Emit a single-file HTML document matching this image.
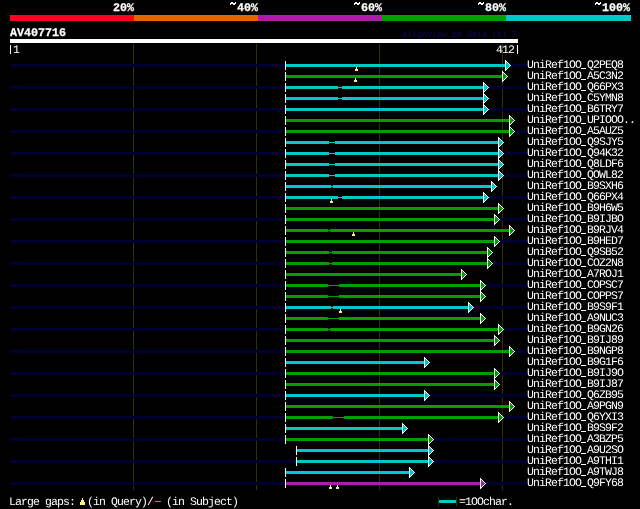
<!DOCTYPE html>
<html><head><meta charset="utf-8"><style>
html,body{margin:0;padding:0;background:#000;width:640px;height:509px;overflow:hidden;position:relative}
div{position:absolute;white-space:pre;font-family:"Liberation Mono",monospace;text-rendering:geometricPrecision;will-change:transform}
.s{font-size:11.5px;line-height:14px;letter-spacing:-0.9px}
.b{font-size:11.667px;line-height:14px;font-weight:bold;-webkit-text-stroke:0.25px currentColor}
.t{font-size:8.7px;line-height:10px;letter-spacing:-0.22px}
</style></head><body>
<svg width="640" height="509" viewBox="0 0 640 509" shape-rendering="crispEdges" style="position:absolute;left:0;top:0"><rect x="10" y="15" width="124" height="6" fill="#ff0022"/><rect x="134" y="15" width="124" height="6" fill="#e46400"/><rect x="258" y="15" width="124" height="6" fill="#a820a8"/><rect x="382" y="15" width="124" height="6" fill="#00a000"/><rect x="506" y="15" width="125" height="6" fill="#00c8c8"/><rect x="10" y="39" width="508" height="4" fill="#ffffff"/><rect x="133" y="44" width="1" height="446" fill="#333000"/><rect x="256" y="44" width="1" height="446" fill="#333000"/><rect x="379" y="44" width="1" height="446" fill="#333000"/><rect x="502" y="44" width="1" height="446" fill="#333000"/><rect x="10" y="64" width="517" height="3" fill="#000030"/><rect x="10" y="86" width="517" height="3" fill="#000030"/><rect x="10" y="108" width="517" height="3" fill="#000030"/><rect x="10" y="130" width="517" height="3" fill="#000030"/><rect x="10" y="152" width="517" height="3" fill="#000030"/><rect x="10" y="174" width="517" height="3" fill="#000030"/><rect x="10" y="196" width="517" height="3" fill="#000030"/><rect x="10" y="218" width="517" height="3" fill="#000030"/><rect x="10" y="240" width="517" height="3" fill="#000030"/><rect x="10" y="262" width="517" height="3" fill="#000030"/><rect x="10" y="284" width="517" height="3" fill="#000030"/><rect x="10" y="306" width="517" height="3" fill="#000030"/><rect x="10" y="328" width="517" height="3" fill="#000030"/><rect x="10" y="350" width="517" height="3" fill="#000030"/><rect x="10" y="372" width="517" height="3" fill="#000030"/><rect x="10" y="394" width="517" height="3" fill="#000030"/><rect x="10" y="416" width="517" height="3" fill="#000030"/><rect x="10" y="438" width="517" height="3" fill="#000030"/><rect x="10" y="460" width="517" height="3" fill="#000030"/><rect x="10" y="482" width="517" height="3" fill="#000030"/><rect x="285" y="61" width="1" height="9" fill="#ffffff"/><rect x="286" y="64" width="219" height="3" fill="#00c8c8"/><rect x="505" y="60" width="1" height="1" fill="#ffffff"/><rect x="505" y="61" width="1" height="1" fill="#ffffff"/><rect x="506" y="61" width="1" height="1" fill="#ffffff"/><rect x="505" y="62" width="1" height="1" fill="#ffffff"/><rect x="507" y="62" width="1" height="1" fill="#ffffff"/><rect x="506" y="62" width="1" height="1" fill="#00c8c8"/><rect x="505" y="63" width="1" height="1" fill="#ffffff"/><rect x="508" y="63" width="1" height="1" fill="#ffffff"/><rect x="506" y="63" width="2" height="1" fill="#00c8c8"/><rect x="505" y="64" width="1" height="1" fill="#ffffff"/><rect x="509" y="64" width="1" height="1" fill="#ffffff"/><rect x="506" y="64" width="3" height="1" fill="#00c8c8"/><rect x="505" y="65" width="1" height="1" fill="#ffffff"/><rect x="510" y="65" width="1" height="1" fill="#ffffff"/><rect x="506" y="65" width="4" height="1" fill="#00c8c8"/><rect x="505" y="66" width="1" height="1" fill="#ffffff"/><rect x="509" y="66" width="1" height="1" fill="#ffffff"/><rect x="506" y="66" width="3" height="1" fill="#00c8c8"/><rect x="505" y="67" width="1" height="1" fill="#ffffff"/><rect x="508" y="67" width="1" height="1" fill="#ffffff"/><rect x="506" y="67" width="2" height="1" fill="#00c8c8"/><rect x="505" y="68" width="1" height="1" fill="#ffffff"/><rect x="507" y="68" width="1" height="1" fill="#ffffff"/><rect x="506" y="68" width="1" height="1" fill="#00c8c8"/><rect x="505" y="69" width="1" height="1" fill="#ffffff"/><rect x="506" y="69" width="1" height="1" fill="#ffffff"/><rect x="505" y="70" width="1" height="1" fill="#ffffff"/><rect x="356" y="67" width="1" height="2" fill="#fff080"/><rect x="355" y="69" width="3" height="2" fill="#fff080"/><rect x="285" y="72" width="1" height="9" fill="#ffffff"/><rect x="286" y="75" width="216" height="3" fill="#00a000"/><rect x="502" y="71" width="1" height="1" fill="#ffffff"/><rect x="502" y="72" width="1" height="1" fill="#ffffff"/><rect x="503" y="72" width="1" height="1" fill="#ffffff"/><rect x="502" y="73" width="1" height="1" fill="#ffffff"/><rect x="504" y="73" width="1" height="1" fill="#ffffff"/><rect x="503" y="73" width="1" height="1" fill="#00a000"/><rect x="502" y="74" width="1" height="1" fill="#ffffff"/><rect x="505" y="74" width="1" height="1" fill="#ffffff"/><rect x="503" y="74" width="2" height="1" fill="#00a000"/><rect x="502" y="75" width="1" height="1" fill="#ffffff"/><rect x="506" y="75" width="1" height="1" fill="#ffffff"/><rect x="503" y="75" width="3" height="1" fill="#00a000"/><rect x="502" y="76" width="1" height="1" fill="#ffffff"/><rect x="507" y="76" width="1" height="1" fill="#ffffff"/><rect x="503" y="76" width="4" height="1" fill="#00a000"/><rect x="502" y="77" width="1" height="1" fill="#ffffff"/><rect x="506" y="77" width="1" height="1" fill="#ffffff"/><rect x="503" y="77" width="3" height="1" fill="#00a000"/><rect x="502" y="78" width="1" height="1" fill="#ffffff"/><rect x="505" y="78" width="1" height="1" fill="#ffffff"/><rect x="503" y="78" width="2" height="1" fill="#00a000"/><rect x="502" y="79" width="1" height="1" fill="#ffffff"/><rect x="504" y="79" width="1" height="1" fill="#ffffff"/><rect x="503" y="79" width="1" height="1" fill="#00a000"/><rect x="502" y="80" width="1" height="1" fill="#ffffff"/><rect x="503" y="80" width="1" height="1" fill="#ffffff"/><rect x="502" y="81" width="1" height="1" fill="#ffffff"/><rect x="355" y="78" width="1" height="2" fill="#fff080"/><rect x="354" y="80" width="3" height="2" fill="#fff080"/><rect x="285" y="83" width="1" height="9" fill="#ffffff"/><rect x="338" y="86" width="4" height="3" fill="#000000"/><rect x="286" y="87" width="197" height="1" fill="#00c8c8"/><rect x="286" y="86" width="52" height="3" fill="#00c8c8"/><rect x="342" y="86" width="141" height="3" fill="#00c8c8"/><rect x="483" y="82" width="1" height="1" fill="#ffffff"/><rect x="483" y="83" width="1" height="1" fill="#ffffff"/><rect x="484" y="83" width="1" height="1" fill="#ffffff"/><rect x="483" y="84" width="1" height="1" fill="#ffffff"/><rect x="485" y="84" width="1" height="1" fill="#ffffff"/><rect x="484" y="84" width="1" height="1" fill="#00c8c8"/><rect x="483" y="85" width="1" height="1" fill="#ffffff"/><rect x="486" y="85" width="1" height="1" fill="#ffffff"/><rect x="484" y="85" width="2" height="1" fill="#00c8c8"/><rect x="483" y="86" width="1" height="1" fill="#ffffff"/><rect x="487" y="86" width="1" height="1" fill="#ffffff"/><rect x="484" y="86" width="3" height="1" fill="#00c8c8"/><rect x="483" y="87" width="1" height="1" fill="#ffffff"/><rect x="488" y="87" width="1" height="1" fill="#ffffff"/><rect x="484" y="87" width="4" height="1" fill="#00c8c8"/><rect x="483" y="88" width="1" height="1" fill="#ffffff"/><rect x="487" y="88" width="1" height="1" fill="#ffffff"/><rect x="484" y="88" width="3" height="1" fill="#00c8c8"/><rect x="483" y="89" width="1" height="1" fill="#ffffff"/><rect x="486" y="89" width="1" height="1" fill="#ffffff"/><rect x="484" y="89" width="2" height="1" fill="#00c8c8"/><rect x="483" y="90" width="1" height="1" fill="#ffffff"/><rect x="485" y="90" width="1" height="1" fill="#ffffff"/><rect x="484" y="90" width="1" height="1" fill="#00c8c8"/><rect x="483" y="91" width="1" height="1" fill="#ffffff"/><rect x="484" y="91" width="1" height="1" fill="#ffffff"/><rect x="483" y="92" width="1" height="1" fill="#ffffff"/><rect x="285" y="94" width="1" height="9" fill="#ffffff"/><rect x="338" y="97" width="4" height="3" fill="#000000"/><rect x="286" y="98" width="197" height="1" fill="#00c8c8"/><rect x="286" y="97" width="52" height="3" fill="#00c8c8"/><rect x="342" y="97" width="141" height="3" fill="#00c8c8"/><rect x="483" y="93" width="1" height="1" fill="#ffffff"/><rect x="483" y="94" width="1" height="1" fill="#ffffff"/><rect x="484" y="94" width="1" height="1" fill="#ffffff"/><rect x="483" y="95" width="1" height="1" fill="#ffffff"/><rect x="485" y="95" width="1" height="1" fill="#ffffff"/><rect x="484" y="95" width="1" height="1" fill="#00c8c8"/><rect x="483" y="96" width="1" height="1" fill="#ffffff"/><rect x="486" y="96" width="1" height="1" fill="#ffffff"/><rect x="484" y="96" width="2" height="1" fill="#00c8c8"/><rect x="483" y="97" width="1" height="1" fill="#ffffff"/><rect x="487" y="97" width="1" height="1" fill="#ffffff"/><rect x="484" y="97" width="3" height="1" fill="#00c8c8"/><rect x="483" y="98" width="1" height="1" fill="#ffffff"/><rect x="488" y="98" width="1" height="1" fill="#ffffff"/><rect x="484" y="98" width="4" height="1" fill="#00c8c8"/><rect x="483" y="99" width="1" height="1" fill="#ffffff"/><rect x="487" y="99" width="1" height="1" fill="#ffffff"/><rect x="484" y="99" width="3" height="1" fill="#00c8c8"/><rect x="483" y="100" width="1" height="1" fill="#ffffff"/><rect x="486" y="100" width="1" height="1" fill="#ffffff"/><rect x="484" y="100" width="2" height="1" fill="#00c8c8"/><rect x="483" y="101" width="1" height="1" fill="#ffffff"/><rect x="485" y="101" width="1" height="1" fill="#ffffff"/><rect x="484" y="101" width="1" height="1" fill="#00c8c8"/><rect x="483" y="102" width="1" height="1" fill="#ffffff"/><rect x="484" y="102" width="1" height="1" fill="#ffffff"/><rect x="483" y="103" width="1" height="1" fill="#ffffff"/><rect x="285" y="105" width="1" height="9" fill="#ffffff"/><rect x="286" y="108" width="197" height="3" fill="#00c8c8"/><rect x="483" y="104" width="1" height="1" fill="#ffffff"/><rect x="483" y="105" width="1" height="1" fill="#ffffff"/><rect x="484" y="105" width="1" height="1" fill="#ffffff"/><rect x="483" y="106" width="1" height="1" fill="#ffffff"/><rect x="485" y="106" width="1" height="1" fill="#ffffff"/><rect x="484" y="106" width="1" height="1" fill="#00c8c8"/><rect x="483" y="107" width="1" height="1" fill="#ffffff"/><rect x="486" y="107" width="1" height="1" fill="#ffffff"/><rect x="484" y="107" width="2" height="1" fill="#00c8c8"/><rect x="483" y="108" width="1" height="1" fill="#ffffff"/><rect x="487" y="108" width="1" height="1" fill="#ffffff"/><rect x="484" y="108" width="3" height="1" fill="#00c8c8"/><rect x="483" y="109" width="1" height="1" fill="#ffffff"/><rect x="488" y="109" width="1" height="1" fill="#ffffff"/><rect x="484" y="109" width="4" height="1" fill="#00c8c8"/><rect x="483" y="110" width="1" height="1" fill="#ffffff"/><rect x="487" y="110" width="1" height="1" fill="#ffffff"/><rect x="484" y="110" width="3" height="1" fill="#00c8c8"/><rect x="483" y="111" width="1" height="1" fill="#ffffff"/><rect x="486" y="111" width="1" height="1" fill="#ffffff"/><rect x="484" y="111" width="2" height="1" fill="#00c8c8"/><rect x="483" y="112" width="1" height="1" fill="#ffffff"/><rect x="485" y="112" width="1" height="1" fill="#ffffff"/><rect x="484" y="112" width="1" height="1" fill="#00c8c8"/><rect x="483" y="113" width="1" height="1" fill="#ffffff"/><rect x="484" y="113" width="1" height="1" fill="#ffffff"/><rect x="483" y="114" width="1" height="1" fill="#ffffff"/><rect x="285" y="116" width="1" height="9" fill="#ffffff"/><rect x="286" y="119" width="223" height="3" fill="#00a000"/><rect x="509" y="115" width="1" height="1" fill="#ffffff"/><rect x="509" y="116" width="1" height="1" fill="#ffffff"/><rect x="510" y="116" width="1" height="1" fill="#ffffff"/><rect x="509" y="117" width="1" height="1" fill="#ffffff"/><rect x="511" y="117" width="1" height="1" fill="#ffffff"/><rect x="510" y="117" width="1" height="1" fill="#00a000"/><rect x="509" y="118" width="1" height="1" fill="#ffffff"/><rect x="512" y="118" width="1" height="1" fill="#ffffff"/><rect x="510" y="118" width="2" height="1" fill="#00a000"/><rect x="509" y="119" width="1" height="1" fill="#ffffff"/><rect x="513" y="119" width="1" height="1" fill="#ffffff"/><rect x="510" y="119" width="3" height="1" fill="#00a000"/><rect x="509" y="120" width="1" height="1" fill="#ffffff"/><rect x="514" y="120" width="1" height="1" fill="#ffffff"/><rect x="510" y="120" width="4" height="1" fill="#00a000"/><rect x="509" y="121" width="1" height="1" fill="#ffffff"/><rect x="513" y="121" width="1" height="1" fill="#ffffff"/><rect x="510" y="121" width="3" height="1" fill="#00a000"/><rect x="509" y="122" width="1" height="1" fill="#ffffff"/><rect x="512" y="122" width="1" height="1" fill="#ffffff"/><rect x="510" y="122" width="2" height="1" fill="#00a000"/><rect x="509" y="123" width="1" height="1" fill="#ffffff"/><rect x="511" y="123" width="1" height="1" fill="#ffffff"/><rect x="510" y="123" width="1" height="1" fill="#00a000"/><rect x="509" y="124" width="1" height="1" fill="#ffffff"/><rect x="510" y="124" width="1" height="1" fill="#ffffff"/><rect x="509" y="125" width="1" height="1" fill="#ffffff"/><rect x="285" y="127" width="1" height="9" fill="#ffffff"/><rect x="286" y="130" width="223" height="3" fill="#00a000"/><rect x="509" y="126" width="1" height="1" fill="#ffffff"/><rect x="509" y="127" width="1" height="1" fill="#ffffff"/><rect x="510" y="127" width="1" height="1" fill="#ffffff"/><rect x="509" y="128" width="1" height="1" fill="#ffffff"/><rect x="511" y="128" width="1" height="1" fill="#ffffff"/><rect x="510" y="128" width="1" height="1" fill="#00a000"/><rect x="509" y="129" width="1" height="1" fill="#ffffff"/><rect x="512" y="129" width="1" height="1" fill="#ffffff"/><rect x="510" y="129" width="2" height="1" fill="#00a000"/><rect x="509" y="130" width="1" height="1" fill="#ffffff"/><rect x="513" y="130" width="1" height="1" fill="#ffffff"/><rect x="510" y="130" width="3" height="1" fill="#00a000"/><rect x="509" y="131" width="1" height="1" fill="#ffffff"/><rect x="514" y="131" width="1" height="1" fill="#ffffff"/><rect x="510" y="131" width="4" height="1" fill="#00a000"/><rect x="509" y="132" width="1" height="1" fill="#ffffff"/><rect x="513" y="132" width="1" height="1" fill="#ffffff"/><rect x="510" y="132" width="3" height="1" fill="#00a000"/><rect x="509" y="133" width="1" height="1" fill="#ffffff"/><rect x="512" y="133" width="1" height="1" fill="#ffffff"/><rect x="510" y="133" width="2" height="1" fill="#00a000"/><rect x="509" y="134" width="1" height="1" fill="#ffffff"/><rect x="511" y="134" width="1" height="1" fill="#ffffff"/><rect x="510" y="134" width="1" height="1" fill="#00a000"/><rect x="509" y="135" width="1" height="1" fill="#ffffff"/><rect x="510" y="135" width="1" height="1" fill="#ffffff"/><rect x="509" y="136" width="1" height="1" fill="#ffffff"/><rect x="285" y="138" width="1" height="9" fill="#ffffff"/><rect x="329" y="141" width="6" height="3" fill="#000000"/><rect x="286" y="142" width="212" height="1" fill="#00c8c8"/><rect x="286" y="141" width="43" height="3" fill="#00c8c8"/><rect x="335" y="141" width="163" height="3" fill="#00c8c8"/><rect x="498" y="137" width="1" height="1" fill="#ffffff"/><rect x="498" y="138" width="1" height="1" fill="#ffffff"/><rect x="499" y="138" width="1" height="1" fill="#ffffff"/><rect x="498" y="139" width="1" height="1" fill="#ffffff"/><rect x="500" y="139" width="1" height="1" fill="#ffffff"/><rect x="499" y="139" width="1" height="1" fill="#00c8c8"/><rect x="498" y="140" width="1" height="1" fill="#ffffff"/><rect x="501" y="140" width="1" height="1" fill="#ffffff"/><rect x="499" y="140" width="2" height="1" fill="#00c8c8"/><rect x="498" y="141" width="1" height="1" fill="#ffffff"/><rect x="502" y="141" width="1" height="1" fill="#ffffff"/><rect x="499" y="141" width="3" height="1" fill="#00c8c8"/><rect x="498" y="142" width="1" height="1" fill="#ffffff"/><rect x="503" y="142" width="1" height="1" fill="#ffffff"/><rect x="499" y="142" width="4" height="1" fill="#00c8c8"/><rect x="498" y="143" width="1" height="1" fill="#ffffff"/><rect x="502" y="143" width="1" height="1" fill="#ffffff"/><rect x="499" y="143" width="3" height="1" fill="#00c8c8"/><rect x="498" y="144" width="1" height="1" fill="#ffffff"/><rect x="501" y="144" width="1" height="1" fill="#ffffff"/><rect x="499" y="144" width="2" height="1" fill="#00c8c8"/><rect x="498" y="145" width="1" height="1" fill="#ffffff"/><rect x="500" y="145" width="1" height="1" fill="#ffffff"/><rect x="499" y="145" width="1" height="1" fill="#00c8c8"/><rect x="498" y="146" width="1" height="1" fill="#ffffff"/><rect x="499" y="146" width="1" height="1" fill="#ffffff"/><rect x="498" y="147" width="1" height="1" fill="#ffffff"/><rect x="285" y="149" width="1" height="9" fill="#ffffff"/><rect x="329" y="152" width="6" height="3" fill="#000000"/><rect x="286" y="153" width="212" height="1" fill="#00c8c8"/><rect x="286" y="152" width="43" height="3" fill="#00c8c8"/><rect x="335" y="152" width="163" height="3" fill="#00c8c8"/><rect x="498" y="148" width="1" height="1" fill="#ffffff"/><rect x="498" y="149" width="1" height="1" fill="#ffffff"/><rect x="499" y="149" width="1" height="1" fill="#ffffff"/><rect x="498" y="150" width="1" height="1" fill="#ffffff"/><rect x="500" y="150" width="1" height="1" fill="#ffffff"/><rect x="499" y="150" width="1" height="1" fill="#00c8c8"/><rect x="498" y="151" width="1" height="1" fill="#ffffff"/><rect x="501" y="151" width="1" height="1" fill="#ffffff"/><rect x="499" y="151" width="2" height="1" fill="#00c8c8"/><rect x="498" y="152" width="1" height="1" fill="#ffffff"/><rect x="502" y="152" width="1" height="1" fill="#ffffff"/><rect x="499" y="152" width="3" height="1" fill="#00c8c8"/><rect x="498" y="153" width="1" height="1" fill="#ffffff"/><rect x="503" y="153" width="1" height="1" fill="#ffffff"/><rect x="499" y="153" width="4" height="1" fill="#00c8c8"/><rect x="498" y="154" width="1" height="1" fill="#ffffff"/><rect x="502" y="154" width="1" height="1" fill="#ffffff"/><rect x="499" y="154" width="3" height="1" fill="#00c8c8"/><rect x="498" y="155" width="1" height="1" fill="#ffffff"/><rect x="501" y="155" width="1" height="1" fill="#ffffff"/><rect x="499" y="155" width="2" height="1" fill="#00c8c8"/><rect x="498" y="156" width="1" height="1" fill="#ffffff"/><rect x="500" y="156" width="1" height="1" fill="#ffffff"/><rect x="499" y="156" width="1" height="1" fill="#00c8c8"/><rect x="498" y="157" width="1" height="1" fill="#ffffff"/><rect x="499" y="157" width="1" height="1" fill="#ffffff"/><rect x="498" y="158" width="1" height="1" fill="#ffffff"/><rect x="285" y="160" width="1" height="9" fill="#ffffff"/><rect x="329" y="163" width="6" height="3" fill="#000000"/><rect x="286" y="164" width="212" height="1" fill="#00c8c8"/><rect x="286" y="163" width="43" height="3" fill="#00c8c8"/><rect x="335" y="163" width="163" height="3" fill="#00c8c8"/><rect x="498" y="159" width="1" height="1" fill="#ffffff"/><rect x="498" y="160" width="1" height="1" fill="#ffffff"/><rect x="499" y="160" width="1" height="1" fill="#ffffff"/><rect x="498" y="161" width="1" height="1" fill="#ffffff"/><rect x="500" y="161" width="1" height="1" fill="#ffffff"/><rect x="499" y="161" width="1" height="1" fill="#00c8c8"/><rect x="498" y="162" width="1" height="1" fill="#ffffff"/><rect x="501" y="162" width="1" height="1" fill="#ffffff"/><rect x="499" y="162" width="2" height="1" fill="#00c8c8"/><rect x="498" y="163" width="1" height="1" fill="#ffffff"/><rect x="502" y="163" width="1" height="1" fill="#ffffff"/><rect x="499" y="163" width="3" height="1" fill="#00c8c8"/><rect x="498" y="164" width="1" height="1" fill="#ffffff"/><rect x="503" y="164" width="1" height="1" fill="#ffffff"/><rect x="499" y="164" width="4" height="1" fill="#00c8c8"/><rect x="498" y="165" width="1" height="1" fill="#ffffff"/><rect x="502" y="165" width="1" height="1" fill="#ffffff"/><rect x="499" y="165" width="3" height="1" fill="#00c8c8"/><rect x="498" y="166" width="1" height="1" fill="#ffffff"/><rect x="501" y="166" width="1" height="1" fill="#ffffff"/><rect x="499" y="166" width="2" height="1" fill="#00c8c8"/><rect x="498" y="167" width="1" height="1" fill="#ffffff"/><rect x="500" y="167" width="1" height="1" fill="#ffffff"/><rect x="499" y="167" width="1" height="1" fill="#00c8c8"/><rect x="498" y="168" width="1" height="1" fill="#ffffff"/><rect x="499" y="168" width="1" height="1" fill="#ffffff"/><rect x="498" y="169" width="1" height="1" fill="#ffffff"/><rect x="285" y="171" width="1" height="9" fill="#ffffff"/><rect x="329" y="174" width="6" height="3" fill="#000000"/><rect x="286" y="175" width="212" height="1" fill="#00c8c8"/><rect x="286" y="174" width="43" height="3" fill="#00c8c8"/><rect x="335" y="174" width="163" height="3" fill="#00c8c8"/><rect x="498" y="170" width="1" height="1" fill="#ffffff"/><rect x="498" y="171" width="1" height="1" fill="#ffffff"/><rect x="499" y="171" width="1" height="1" fill="#ffffff"/><rect x="498" y="172" width="1" height="1" fill="#ffffff"/><rect x="500" y="172" width="1" height="1" fill="#ffffff"/><rect x="499" y="172" width="1" height="1" fill="#00c8c8"/><rect x="498" y="173" width="1" height="1" fill="#ffffff"/><rect x="501" y="173" width="1" height="1" fill="#ffffff"/><rect x="499" y="173" width="2" height="1" fill="#00c8c8"/><rect x="498" y="174" width="1" height="1" fill="#ffffff"/><rect x="502" y="174" width="1" height="1" fill="#ffffff"/><rect x="499" y="174" width="3" height="1" fill="#00c8c8"/><rect x="498" y="175" width="1" height="1" fill="#ffffff"/><rect x="503" y="175" width="1" height="1" fill="#ffffff"/><rect x="499" y="175" width="4" height="1" fill="#00c8c8"/><rect x="498" y="176" width="1" height="1" fill="#ffffff"/><rect x="502" y="176" width="1" height="1" fill="#ffffff"/><rect x="499" y="176" width="3" height="1" fill="#00c8c8"/><rect x="498" y="177" width="1" height="1" fill="#ffffff"/><rect x="501" y="177" width="1" height="1" fill="#ffffff"/><rect x="499" y="177" width="2" height="1" fill="#00c8c8"/><rect x="498" y="178" width="1" height="1" fill="#ffffff"/><rect x="500" y="178" width="1" height="1" fill="#ffffff"/><rect x="499" y="178" width="1" height="1" fill="#00c8c8"/><rect x="498" y="179" width="1" height="1" fill="#ffffff"/><rect x="499" y="179" width="1" height="1" fill="#ffffff"/><rect x="498" y="180" width="1" height="1" fill="#ffffff"/><rect x="285" y="182" width="1" height="9" fill="#ffffff"/><rect x="331" y="185" width="2" height="3" fill="#000000"/><rect x="286" y="186" width="205" height="1" fill="#00c8c8"/><rect x="286" y="185" width="45" height="3" fill="#00c8c8"/><rect x="333" y="185" width="158" height="3" fill="#00c8c8"/><rect x="491" y="181" width="1" height="1" fill="#ffffff"/><rect x="491" y="182" width="1" height="1" fill="#ffffff"/><rect x="492" y="182" width="1" height="1" fill="#ffffff"/><rect x="491" y="183" width="1" height="1" fill="#ffffff"/><rect x="493" y="183" width="1" height="1" fill="#ffffff"/><rect x="492" y="183" width="1" height="1" fill="#00c8c8"/><rect x="491" y="184" width="1" height="1" fill="#ffffff"/><rect x="494" y="184" width="1" height="1" fill="#ffffff"/><rect x="492" y="184" width="2" height="1" fill="#00c8c8"/><rect x="491" y="185" width="1" height="1" fill="#ffffff"/><rect x="495" y="185" width="1" height="1" fill="#ffffff"/><rect x="492" y="185" width="3" height="1" fill="#00c8c8"/><rect x="491" y="186" width="1" height="1" fill="#ffffff"/><rect x="496" y="186" width="1" height="1" fill="#ffffff"/><rect x="492" y="186" width="4" height="1" fill="#00c8c8"/><rect x="491" y="187" width="1" height="1" fill="#ffffff"/><rect x="495" y="187" width="1" height="1" fill="#ffffff"/><rect x="492" y="187" width="3" height="1" fill="#00c8c8"/><rect x="491" y="188" width="1" height="1" fill="#ffffff"/><rect x="494" y="188" width="1" height="1" fill="#ffffff"/><rect x="492" y="188" width="2" height="1" fill="#00c8c8"/><rect x="491" y="189" width="1" height="1" fill="#ffffff"/><rect x="493" y="189" width="1" height="1" fill="#ffffff"/><rect x="492" y="189" width="1" height="1" fill="#00c8c8"/><rect x="491" y="190" width="1" height="1" fill="#ffffff"/><rect x="492" y="190" width="1" height="1" fill="#ffffff"/><rect x="491" y="191" width="1" height="1" fill="#ffffff"/><rect x="285" y="193" width="1" height="9" fill="#ffffff"/><rect x="338" y="196" width="4" height="3" fill="#000000"/><rect x="286" y="197" width="197" height="1" fill="#00c8c8"/><rect x="286" y="196" width="52" height="3" fill="#00c8c8"/><rect x="342" y="196" width="141" height="3" fill="#00c8c8"/><rect x="483" y="192" width="1" height="1" fill="#ffffff"/><rect x="483" y="193" width="1" height="1" fill="#ffffff"/><rect x="484" y="193" width="1" height="1" fill="#ffffff"/><rect x="483" y="194" width="1" height="1" fill="#ffffff"/><rect x="485" y="194" width="1" height="1" fill="#ffffff"/><rect x="484" y="194" width="1" height="1" fill="#00c8c8"/><rect x="483" y="195" width="1" height="1" fill="#ffffff"/><rect x="486" y="195" width="1" height="1" fill="#ffffff"/><rect x="484" y="195" width="2" height="1" fill="#00c8c8"/><rect x="483" y="196" width="1" height="1" fill="#ffffff"/><rect x="487" y="196" width="1" height="1" fill="#ffffff"/><rect x="484" y="196" width="3" height="1" fill="#00c8c8"/><rect x="483" y="197" width="1" height="1" fill="#ffffff"/><rect x="488" y="197" width="1" height="1" fill="#ffffff"/><rect x="484" y="197" width="4" height="1" fill="#00c8c8"/><rect x="483" y="198" width="1" height="1" fill="#ffffff"/><rect x="487" y="198" width="1" height="1" fill="#ffffff"/><rect x="484" y="198" width="3" height="1" fill="#00c8c8"/><rect x="483" y="199" width="1" height="1" fill="#ffffff"/><rect x="486" y="199" width="1" height="1" fill="#ffffff"/><rect x="484" y="199" width="2" height="1" fill="#00c8c8"/><rect x="483" y="200" width="1" height="1" fill="#ffffff"/><rect x="485" y="200" width="1" height="1" fill="#ffffff"/><rect x="484" y="200" width="1" height="1" fill="#00c8c8"/><rect x="483" y="201" width="1" height="1" fill="#ffffff"/><rect x="484" y="201" width="1" height="1" fill="#ffffff"/><rect x="483" y="202" width="1" height="1" fill="#ffffff"/><rect x="331" y="199" width="1" height="2" fill="#fff080"/><rect x="330" y="201" width="3" height="2" fill="#fff080"/><rect x="285" y="204" width="1" height="9" fill="#ffffff"/><rect x="286" y="207" width="212" height="3" fill="#00a000"/><rect x="498" y="203" width="1" height="1" fill="#ffffff"/><rect x="498" y="204" width="1" height="1" fill="#ffffff"/><rect x="499" y="204" width="1" height="1" fill="#ffffff"/><rect x="498" y="205" width="1" height="1" fill="#ffffff"/><rect x="500" y="205" width="1" height="1" fill="#ffffff"/><rect x="499" y="205" width="1" height="1" fill="#00a000"/><rect x="498" y="206" width="1" height="1" fill="#ffffff"/><rect x="501" y="206" width="1" height="1" fill="#ffffff"/><rect x="499" y="206" width="2" height="1" fill="#00a000"/><rect x="498" y="207" width="1" height="1" fill="#ffffff"/><rect x="502" y="207" width="1" height="1" fill="#ffffff"/><rect x="499" y="207" width="3" height="1" fill="#00a000"/><rect x="498" y="208" width="1" height="1" fill="#ffffff"/><rect x="503" y="208" width="1" height="1" fill="#ffffff"/><rect x="499" y="208" width="4" height="1" fill="#00a000"/><rect x="498" y="209" width="1" height="1" fill="#ffffff"/><rect x="502" y="209" width="1" height="1" fill="#ffffff"/><rect x="499" y="209" width="3" height="1" fill="#00a000"/><rect x="498" y="210" width="1" height="1" fill="#ffffff"/><rect x="501" y="210" width="1" height="1" fill="#ffffff"/><rect x="499" y="210" width="2" height="1" fill="#00a000"/><rect x="498" y="211" width="1" height="1" fill="#ffffff"/><rect x="500" y="211" width="1" height="1" fill="#ffffff"/><rect x="499" y="211" width="1" height="1" fill="#00a000"/><rect x="498" y="212" width="1" height="1" fill="#ffffff"/><rect x="499" y="212" width="1" height="1" fill="#ffffff"/><rect x="498" y="213" width="1" height="1" fill="#ffffff"/><rect x="285" y="215" width="1" height="9" fill="#ffffff"/><rect x="286" y="218" width="208" height="3" fill="#00a000"/><rect x="494" y="214" width="1" height="1" fill="#ffffff"/><rect x="494" y="215" width="1" height="1" fill="#ffffff"/><rect x="495" y="215" width="1" height="1" fill="#ffffff"/><rect x="494" y="216" width="1" height="1" fill="#ffffff"/><rect x="496" y="216" width="1" height="1" fill="#ffffff"/><rect x="495" y="216" width="1" height="1" fill="#00a000"/><rect x="494" y="217" width="1" height="1" fill="#ffffff"/><rect x="497" y="217" width="1" height="1" fill="#ffffff"/><rect x="495" y="217" width="2" height="1" fill="#00a000"/><rect x="494" y="218" width="1" height="1" fill="#ffffff"/><rect x="498" y="218" width="1" height="1" fill="#ffffff"/><rect x="495" y="218" width="3" height="1" fill="#00a000"/><rect x="494" y="219" width="1" height="1" fill="#ffffff"/><rect x="499" y="219" width="1" height="1" fill="#ffffff"/><rect x="495" y="219" width="4" height="1" fill="#00a000"/><rect x="494" y="220" width="1" height="1" fill="#ffffff"/><rect x="498" y="220" width="1" height="1" fill="#ffffff"/><rect x="495" y="220" width="3" height="1" fill="#00a000"/><rect x="494" y="221" width="1" height="1" fill="#ffffff"/><rect x="497" y="221" width="1" height="1" fill="#ffffff"/><rect x="495" y="221" width="2" height="1" fill="#00a000"/><rect x="494" y="222" width="1" height="1" fill="#ffffff"/><rect x="496" y="222" width="1" height="1" fill="#ffffff"/><rect x="495" y="222" width="1" height="1" fill="#00a000"/><rect x="494" y="223" width="1" height="1" fill="#ffffff"/><rect x="495" y="223" width="1" height="1" fill="#ffffff"/><rect x="494" y="224" width="1" height="1" fill="#ffffff"/><rect x="285" y="226" width="1" height="9" fill="#ffffff"/><rect x="328" y="229" width="2" height="3" fill="#000000"/><rect x="286" y="230" width="223" height="1" fill="#00a000"/><rect x="286" y="229" width="42" height="3" fill="#00a000"/><rect x="330" y="229" width="179" height="3" fill="#00a000"/><rect x="509" y="225" width="1" height="1" fill="#ffffff"/><rect x="509" y="226" width="1" height="1" fill="#ffffff"/><rect x="510" y="226" width="1" height="1" fill="#ffffff"/><rect x="509" y="227" width="1" height="1" fill="#ffffff"/><rect x="511" y="227" width="1" height="1" fill="#ffffff"/><rect x="510" y="227" width="1" height="1" fill="#00a000"/><rect x="509" y="228" width="1" height="1" fill="#ffffff"/><rect x="512" y="228" width="1" height="1" fill="#ffffff"/><rect x="510" y="228" width="2" height="1" fill="#00a000"/><rect x="509" y="229" width="1" height="1" fill="#ffffff"/><rect x="513" y="229" width="1" height="1" fill="#ffffff"/><rect x="510" y="229" width="3" height="1" fill="#00a000"/><rect x="509" y="230" width="1" height="1" fill="#ffffff"/><rect x="514" y="230" width="1" height="1" fill="#ffffff"/><rect x="510" y="230" width="4" height="1" fill="#00a000"/><rect x="509" y="231" width="1" height="1" fill="#ffffff"/><rect x="513" y="231" width="1" height="1" fill="#ffffff"/><rect x="510" y="231" width="3" height="1" fill="#00a000"/><rect x="509" y="232" width="1" height="1" fill="#ffffff"/><rect x="512" y="232" width="1" height="1" fill="#ffffff"/><rect x="510" y="232" width="2" height="1" fill="#00a000"/><rect x="509" y="233" width="1" height="1" fill="#ffffff"/><rect x="511" y="233" width="1" height="1" fill="#ffffff"/><rect x="510" y="233" width="1" height="1" fill="#00a000"/><rect x="509" y="234" width="1" height="1" fill="#ffffff"/><rect x="510" y="234" width="1" height="1" fill="#ffffff"/><rect x="509" y="235" width="1" height="1" fill="#ffffff"/><rect x="353" y="232" width="1" height="2" fill="#fff080"/><rect x="352" y="234" width="3" height="2" fill="#fff080"/><rect x="285" y="237" width="1" height="9" fill="#ffffff"/><rect x="286" y="240" width="208" height="3" fill="#00a000"/><rect x="494" y="236" width="1" height="1" fill="#ffffff"/><rect x="494" y="237" width="1" height="1" fill="#ffffff"/><rect x="495" y="237" width="1" height="1" fill="#ffffff"/><rect x="494" y="238" width="1" height="1" fill="#ffffff"/><rect x="496" y="238" width="1" height="1" fill="#ffffff"/><rect x="495" y="238" width="1" height="1" fill="#00a000"/><rect x="494" y="239" width="1" height="1" fill="#ffffff"/><rect x="497" y="239" width="1" height="1" fill="#ffffff"/><rect x="495" y="239" width="2" height="1" fill="#00a000"/><rect x="494" y="240" width="1" height="1" fill="#ffffff"/><rect x="498" y="240" width="1" height="1" fill="#ffffff"/><rect x="495" y="240" width="3" height="1" fill="#00a000"/><rect x="494" y="241" width="1" height="1" fill="#ffffff"/><rect x="499" y="241" width="1" height="1" fill="#ffffff"/><rect x="495" y="241" width="4" height="1" fill="#00a000"/><rect x="494" y="242" width="1" height="1" fill="#ffffff"/><rect x="498" y="242" width="1" height="1" fill="#ffffff"/><rect x="495" y="242" width="3" height="1" fill="#00a000"/><rect x="494" y="243" width="1" height="1" fill="#ffffff"/><rect x="497" y="243" width="1" height="1" fill="#ffffff"/><rect x="495" y="243" width="2" height="1" fill="#00a000"/><rect x="494" y="244" width="1" height="1" fill="#ffffff"/><rect x="496" y="244" width="1" height="1" fill="#ffffff"/><rect x="495" y="244" width="1" height="1" fill="#00a000"/><rect x="494" y="245" width="1" height="1" fill="#ffffff"/><rect x="495" y="245" width="1" height="1" fill="#ffffff"/><rect x="494" y="246" width="1" height="1" fill="#ffffff"/><rect x="285" y="248" width="1" height="9" fill="#ffffff"/><rect x="329" y="251" width="3" height="3" fill="#000000"/><rect x="286" y="252" width="201" height="1" fill="#00a000"/><rect x="286" y="251" width="43" height="3" fill="#00a000"/><rect x="332" y="251" width="155" height="3" fill="#00a000"/><rect x="487" y="247" width="1" height="1" fill="#ffffff"/><rect x="487" y="248" width="1" height="1" fill="#ffffff"/><rect x="488" y="248" width="1" height="1" fill="#ffffff"/><rect x="487" y="249" width="1" height="1" fill="#ffffff"/><rect x="489" y="249" width="1" height="1" fill="#ffffff"/><rect x="488" y="249" width="1" height="1" fill="#00a000"/><rect x="487" y="250" width="1" height="1" fill="#ffffff"/><rect x="490" y="250" width="1" height="1" fill="#ffffff"/><rect x="488" y="250" width="2" height="1" fill="#00a000"/><rect x="487" y="251" width="1" height="1" fill="#ffffff"/><rect x="491" y="251" width="1" height="1" fill="#ffffff"/><rect x="488" y="251" width="3" height="1" fill="#00a000"/><rect x="487" y="252" width="1" height="1" fill="#ffffff"/><rect x="492" y="252" width="1" height="1" fill="#ffffff"/><rect x="488" y="252" width="4" height="1" fill="#00a000"/><rect x="487" y="253" width="1" height="1" fill="#ffffff"/><rect x="491" y="253" width="1" height="1" fill="#ffffff"/><rect x="488" y="253" width="3" height="1" fill="#00a000"/><rect x="487" y="254" width="1" height="1" fill="#ffffff"/><rect x="490" y="254" width="1" height="1" fill="#ffffff"/><rect x="488" y="254" width="2" height="1" fill="#00a000"/><rect x="487" y="255" width="1" height="1" fill="#ffffff"/><rect x="489" y="255" width="1" height="1" fill="#ffffff"/><rect x="488" y="255" width="1" height="1" fill="#00a000"/><rect x="487" y="256" width="1" height="1" fill="#ffffff"/><rect x="488" y="256" width="1" height="1" fill="#ffffff"/><rect x="487" y="257" width="1" height="1" fill="#ffffff"/><rect x="285" y="259" width="1" height="9" fill="#ffffff"/><rect x="329" y="262" width="3" height="3" fill="#000000"/><rect x="286" y="263" width="201" height="1" fill="#00a000"/><rect x="286" y="262" width="43" height="3" fill="#00a000"/><rect x="332" y="262" width="155" height="3" fill="#00a000"/><rect x="487" y="258" width="1" height="1" fill="#ffffff"/><rect x="487" y="259" width="1" height="1" fill="#ffffff"/><rect x="488" y="259" width="1" height="1" fill="#ffffff"/><rect x="487" y="260" width="1" height="1" fill="#ffffff"/><rect x="489" y="260" width="1" height="1" fill="#ffffff"/><rect x="488" y="260" width="1" height="1" fill="#00a000"/><rect x="487" y="261" width="1" height="1" fill="#ffffff"/><rect x="490" y="261" width="1" height="1" fill="#ffffff"/><rect x="488" y="261" width="2" height="1" fill="#00a000"/><rect x="487" y="262" width="1" height="1" fill="#ffffff"/><rect x="491" y="262" width="1" height="1" fill="#ffffff"/><rect x="488" y="262" width="3" height="1" fill="#00a000"/><rect x="487" y="263" width="1" height="1" fill="#ffffff"/><rect x="492" y="263" width="1" height="1" fill="#ffffff"/><rect x="488" y="263" width="4" height="1" fill="#00a000"/><rect x="487" y="264" width="1" height="1" fill="#ffffff"/><rect x="491" y="264" width="1" height="1" fill="#ffffff"/><rect x="488" y="264" width="3" height="1" fill="#00a000"/><rect x="487" y="265" width="1" height="1" fill="#ffffff"/><rect x="490" y="265" width="1" height="1" fill="#ffffff"/><rect x="488" y="265" width="2" height="1" fill="#00a000"/><rect x="487" y="266" width="1" height="1" fill="#ffffff"/><rect x="489" y="266" width="1" height="1" fill="#ffffff"/><rect x="488" y="266" width="1" height="1" fill="#00a000"/><rect x="487" y="267" width="1" height="1" fill="#ffffff"/><rect x="488" y="267" width="1" height="1" fill="#ffffff"/><rect x="487" y="268" width="1" height="1" fill="#ffffff"/><rect x="285" y="270" width="1" height="9" fill="#ffffff"/><rect x="286" y="273" width="175" height="3" fill="#00a000"/><rect x="461" y="269" width="1" height="1" fill="#ffffff"/><rect x="461" y="270" width="1" height="1" fill="#ffffff"/><rect x="462" y="270" width="1" height="1" fill="#ffffff"/><rect x="461" y="271" width="1" height="1" fill="#ffffff"/><rect x="463" y="271" width="1" height="1" fill="#ffffff"/><rect x="462" y="271" width="1" height="1" fill="#00a000"/><rect x="461" y="272" width="1" height="1" fill="#ffffff"/><rect x="464" y="272" width="1" height="1" fill="#ffffff"/><rect x="462" y="272" width="2" height="1" fill="#00a000"/><rect x="461" y="273" width="1" height="1" fill="#ffffff"/><rect x="465" y="273" width="1" height="1" fill="#ffffff"/><rect x="462" y="273" width="3" height="1" fill="#00a000"/><rect x="461" y="274" width="1" height="1" fill="#ffffff"/><rect x="466" y="274" width="1" height="1" fill="#ffffff"/><rect x="462" y="274" width="4" height="1" fill="#00a000"/><rect x="461" y="275" width="1" height="1" fill="#ffffff"/><rect x="465" y="275" width="1" height="1" fill="#ffffff"/><rect x="462" y="275" width="3" height="1" fill="#00a000"/><rect x="461" y="276" width="1" height="1" fill="#ffffff"/><rect x="464" y="276" width="1" height="1" fill="#ffffff"/><rect x="462" y="276" width="2" height="1" fill="#00a000"/><rect x="461" y="277" width="1" height="1" fill="#ffffff"/><rect x="463" y="277" width="1" height="1" fill="#ffffff"/><rect x="462" y="277" width="1" height="1" fill="#00a000"/><rect x="461" y="278" width="1" height="1" fill="#ffffff"/><rect x="462" y="278" width="1" height="1" fill="#ffffff"/><rect x="461" y="279" width="1" height="1" fill="#ffffff"/><rect x="285" y="281" width="1" height="9" fill="#ffffff"/><rect x="328" y="284" width="11" height="3" fill="#000000"/><rect x="286" y="285" width="194" height="1" fill="#00a000"/><rect x="286" y="284" width="42" height="3" fill="#00a000"/><rect x="339" y="284" width="141" height="3" fill="#00a000"/><rect x="480" y="280" width="1" height="1" fill="#ffffff"/><rect x="480" y="281" width="1" height="1" fill="#ffffff"/><rect x="481" y="281" width="1" height="1" fill="#ffffff"/><rect x="480" y="282" width="1" height="1" fill="#ffffff"/><rect x="482" y="282" width="1" height="1" fill="#ffffff"/><rect x="481" y="282" width="1" height="1" fill="#00a000"/><rect x="480" y="283" width="1" height="1" fill="#ffffff"/><rect x="483" y="283" width="1" height="1" fill="#ffffff"/><rect x="481" y="283" width="2" height="1" fill="#00a000"/><rect x="480" y="284" width="1" height="1" fill="#ffffff"/><rect x="484" y="284" width="1" height="1" fill="#ffffff"/><rect x="481" y="284" width="3" height="1" fill="#00a000"/><rect x="480" y="285" width="1" height="1" fill="#ffffff"/><rect x="485" y="285" width="1" height="1" fill="#ffffff"/><rect x="481" y="285" width="4" height="1" fill="#00a000"/><rect x="480" y="286" width="1" height="1" fill="#ffffff"/><rect x="484" y="286" width="1" height="1" fill="#ffffff"/><rect x="481" y="286" width="3" height="1" fill="#00a000"/><rect x="480" y="287" width="1" height="1" fill="#ffffff"/><rect x="483" y="287" width="1" height="1" fill="#ffffff"/><rect x="481" y="287" width="2" height="1" fill="#00a000"/><rect x="480" y="288" width="1" height="1" fill="#ffffff"/><rect x="482" y="288" width="1" height="1" fill="#ffffff"/><rect x="481" y="288" width="1" height="1" fill="#00a000"/><rect x="480" y="289" width="1" height="1" fill="#ffffff"/><rect x="481" y="289" width="1" height="1" fill="#ffffff"/><rect x="480" y="290" width="1" height="1" fill="#ffffff"/><rect x="285" y="292" width="1" height="9" fill="#ffffff"/><rect x="328" y="295" width="11" height="3" fill="#000000"/><rect x="286" y="296" width="194" height="1" fill="#00a000"/><rect x="286" y="295" width="42" height="3" fill="#00a000"/><rect x="339" y="295" width="141" height="3" fill="#00a000"/><rect x="480" y="291" width="1" height="1" fill="#ffffff"/><rect x="480" y="292" width="1" height="1" fill="#ffffff"/><rect x="481" y="292" width="1" height="1" fill="#ffffff"/><rect x="480" y="293" width="1" height="1" fill="#ffffff"/><rect x="482" y="293" width="1" height="1" fill="#ffffff"/><rect x="481" y="293" width="1" height="1" fill="#00a000"/><rect x="480" y="294" width="1" height="1" fill="#ffffff"/><rect x="483" y="294" width="1" height="1" fill="#ffffff"/><rect x="481" y="294" width="2" height="1" fill="#00a000"/><rect x="480" y="295" width="1" height="1" fill="#ffffff"/><rect x="484" y="295" width="1" height="1" fill="#ffffff"/><rect x="481" y="295" width="3" height="1" fill="#00a000"/><rect x="480" y="296" width="1" height="1" fill="#ffffff"/><rect x="485" y="296" width="1" height="1" fill="#ffffff"/><rect x="481" y="296" width="4" height="1" fill="#00a000"/><rect x="480" y="297" width="1" height="1" fill="#ffffff"/><rect x="484" y="297" width="1" height="1" fill="#ffffff"/><rect x="481" y="297" width="3" height="1" fill="#00a000"/><rect x="480" y="298" width="1" height="1" fill="#ffffff"/><rect x="483" y="298" width="1" height="1" fill="#ffffff"/><rect x="481" y="298" width="2" height="1" fill="#00a000"/><rect x="480" y="299" width="1" height="1" fill="#ffffff"/><rect x="482" y="299" width="1" height="1" fill="#ffffff"/><rect x="481" y="299" width="1" height="1" fill="#00a000"/><rect x="480" y="300" width="1" height="1" fill="#ffffff"/><rect x="481" y="300" width="1" height="1" fill="#ffffff"/><rect x="480" y="301" width="1" height="1" fill="#ffffff"/><rect x="285" y="303" width="1" height="9" fill="#ffffff"/><rect x="331" y="306" width="2" height="3" fill="#000000"/><rect x="286" y="307" width="182" height="1" fill="#00c8c8"/><rect x="286" y="306" width="45" height="3" fill="#00c8c8"/><rect x="333" y="306" width="135" height="3" fill="#00c8c8"/><rect x="468" y="302" width="1" height="1" fill="#ffffff"/><rect x="468" y="303" width="1" height="1" fill="#ffffff"/><rect x="469" y="303" width="1" height="1" fill="#ffffff"/><rect x="468" y="304" width="1" height="1" fill="#ffffff"/><rect x="470" y="304" width="1" height="1" fill="#ffffff"/><rect x="469" y="304" width="1" height="1" fill="#00c8c8"/><rect x="468" y="305" width="1" height="1" fill="#ffffff"/><rect x="471" y="305" width="1" height="1" fill="#ffffff"/><rect x="469" y="305" width="2" height="1" fill="#00c8c8"/><rect x="468" y="306" width="1" height="1" fill="#ffffff"/><rect x="472" y="306" width="1" height="1" fill="#ffffff"/><rect x="469" y="306" width="3" height="1" fill="#00c8c8"/><rect x="468" y="307" width="1" height="1" fill="#ffffff"/><rect x="473" y="307" width="1" height="1" fill="#ffffff"/><rect x="469" y="307" width="4" height="1" fill="#00c8c8"/><rect x="468" y="308" width="1" height="1" fill="#ffffff"/><rect x="472" y="308" width="1" height="1" fill="#ffffff"/><rect x="469" y="308" width="3" height="1" fill="#00c8c8"/><rect x="468" y="309" width="1" height="1" fill="#ffffff"/><rect x="471" y="309" width="1" height="1" fill="#ffffff"/><rect x="469" y="309" width="2" height="1" fill="#00c8c8"/><rect x="468" y="310" width="1" height="1" fill="#ffffff"/><rect x="470" y="310" width="1" height="1" fill="#ffffff"/><rect x="469" y="310" width="1" height="1" fill="#00c8c8"/><rect x="468" y="311" width="1" height="1" fill="#ffffff"/><rect x="469" y="311" width="1" height="1" fill="#ffffff"/><rect x="468" y="312" width="1" height="1" fill="#ffffff"/><rect x="340" y="309" width="1" height="2" fill="#fff080"/><rect x="339" y="311" width="3" height="2" fill="#fff080"/><rect x="285" y="314" width="1" height="9" fill="#ffffff"/><rect x="328" y="317" width="11" height="3" fill="#000000"/><rect x="286" y="318" width="194" height="1" fill="#00a000"/><rect x="286" y="317" width="42" height="3" fill="#00a000"/><rect x="339" y="317" width="141" height="3" fill="#00a000"/><rect x="480" y="313" width="1" height="1" fill="#ffffff"/><rect x="480" y="314" width="1" height="1" fill="#ffffff"/><rect x="481" y="314" width="1" height="1" fill="#ffffff"/><rect x="480" y="315" width="1" height="1" fill="#ffffff"/><rect x="482" y="315" width="1" height="1" fill="#ffffff"/><rect x="481" y="315" width="1" height="1" fill="#00a000"/><rect x="480" y="316" width="1" height="1" fill="#ffffff"/><rect x="483" y="316" width="1" height="1" fill="#ffffff"/><rect x="481" y="316" width="2" height="1" fill="#00a000"/><rect x="480" y="317" width="1" height="1" fill="#ffffff"/><rect x="484" y="317" width="1" height="1" fill="#ffffff"/><rect x="481" y="317" width="3" height="1" fill="#00a000"/><rect x="480" y="318" width="1" height="1" fill="#ffffff"/><rect x="485" y="318" width="1" height="1" fill="#ffffff"/><rect x="481" y="318" width="4" height="1" fill="#00a000"/><rect x="480" y="319" width="1" height="1" fill="#ffffff"/><rect x="484" y="319" width="1" height="1" fill="#ffffff"/><rect x="481" y="319" width="3" height="1" fill="#00a000"/><rect x="480" y="320" width="1" height="1" fill="#ffffff"/><rect x="483" y="320" width="1" height="1" fill="#ffffff"/><rect x="481" y="320" width="2" height="1" fill="#00a000"/><rect x="480" y="321" width="1" height="1" fill="#ffffff"/><rect x="482" y="321" width="1" height="1" fill="#ffffff"/><rect x="481" y="321" width="1" height="1" fill="#00a000"/><rect x="480" y="322" width="1" height="1" fill="#ffffff"/><rect x="481" y="322" width="1" height="1" fill="#ffffff"/><rect x="480" y="323" width="1" height="1" fill="#ffffff"/><rect x="285" y="325" width="1" height="9" fill="#ffffff"/><rect x="328" y="328" width="2" height="3" fill="#000000"/><rect x="286" y="329" width="212" height="1" fill="#00a000"/><rect x="286" y="328" width="42" height="3" fill="#00a000"/><rect x="330" y="328" width="168" height="3" fill="#00a000"/><rect x="498" y="324" width="1" height="1" fill="#ffffff"/><rect x="498" y="325" width="1" height="1" fill="#ffffff"/><rect x="499" y="325" width="1" height="1" fill="#ffffff"/><rect x="498" y="326" width="1" height="1" fill="#ffffff"/><rect x="500" y="326" width="1" height="1" fill="#ffffff"/><rect x="499" y="326" width="1" height="1" fill="#00a000"/><rect x="498" y="327" width="1" height="1" fill="#ffffff"/><rect x="501" y="327" width="1" height="1" fill="#ffffff"/><rect x="499" y="327" width="2" height="1" fill="#00a000"/><rect x="498" y="328" width="1" height="1" fill="#ffffff"/><rect x="502" y="328" width="1" height="1" fill="#ffffff"/><rect x="499" y="328" width="3" height="1" fill="#00a000"/><rect x="498" y="329" width="1" height="1" fill="#ffffff"/><rect x="503" y="329" width="1" height="1" fill="#ffffff"/><rect x="499" y="329" width="4" height="1" fill="#00a000"/><rect x="498" y="330" width="1" height="1" fill="#ffffff"/><rect x="502" y="330" width="1" height="1" fill="#ffffff"/><rect x="499" y="330" width="3" height="1" fill="#00a000"/><rect x="498" y="331" width="1" height="1" fill="#ffffff"/><rect x="501" y="331" width="1" height="1" fill="#ffffff"/><rect x="499" y="331" width="2" height="1" fill="#00a000"/><rect x="498" y="332" width="1" height="1" fill="#ffffff"/><rect x="500" y="332" width="1" height="1" fill="#ffffff"/><rect x="499" y="332" width="1" height="1" fill="#00a000"/><rect x="498" y="333" width="1" height="1" fill="#ffffff"/><rect x="499" y="333" width="1" height="1" fill="#ffffff"/><rect x="498" y="334" width="1" height="1" fill="#ffffff"/><rect x="285" y="336" width="1" height="9" fill="#ffffff"/><rect x="286" y="339" width="208" height="3" fill="#00a000"/><rect x="494" y="335" width="1" height="1" fill="#ffffff"/><rect x="494" y="336" width="1" height="1" fill="#ffffff"/><rect x="495" y="336" width="1" height="1" fill="#ffffff"/><rect x="494" y="337" width="1" height="1" fill="#ffffff"/><rect x="496" y="337" width="1" height="1" fill="#ffffff"/><rect x="495" y="337" width="1" height="1" fill="#00a000"/><rect x="494" y="338" width="1" height="1" fill="#ffffff"/><rect x="497" y="338" width="1" height="1" fill="#ffffff"/><rect x="495" y="338" width="2" height="1" fill="#00a000"/><rect x="494" y="339" width="1" height="1" fill="#ffffff"/><rect x="498" y="339" width="1" height="1" fill="#ffffff"/><rect x="495" y="339" width="3" height="1" fill="#00a000"/><rect x="494" y="340" width="1" height="1" fill="#ffffff"/><rect x="499" y="340" width="1" height="1" fill="#ffffff"/><rect x="495" y="340" width="4" height="1" fill="#00a000"/><rect x="494" y="341" width="1" height="1" fill="#ffffff"/><rect x="498" y="341" width="1" height="1" fill="#ffffff"/><rect x="495" y="341" width="3" height="1" fill="#00a000"/><rect x="494" y="342" width="1" height="1" fill="#ffffff"/><rect x="497" y="342" width="1" height="1" fill="#ffffff"/><rect x="495" y="342" width="2" height="1" fill="#00a000"/><rect x="494" y="343" width="1" height="1" fill="#ffffff"/><rect x="496" y="343" width="1" height="1" fill="#ffffff"/><rect x="495" y="343" width="1" height="1" fill="#00a000"/><rect x="494" y="344" width="1" height="1" fill="#ffffff"/><rect x="495" y="344" width="1" height="1" fill="#ffffff"/><rect x="494" y="345" width="1" height="1" fill="#ffffff"/><rect x="285" y="347" width="1" height="9" fill="#ffffff"/><rect x="286" y="350" width="223" height="3" fill="#00a000"/><rect x="509" y="346" width="1" height="1" fill="#ffffff"/><rect x="509" y="347" width="1" height="1" fill="#ffffff"/><rect x="510" y="347" width="1" height="1" fill="#ffffff"/><rect x="509" y="348" width="1" height="1" fill="#ffffff"/><rect x="511" y="348" width="1" height="1" fill="#ffffff"/><rect x="510" y="348" width="1" height="1" fill="#00a000"/><rect x="509" y="349" width="1" height="1" fill="#ffffff"/><rect x="512" y="349" width="1" height="1" fill="#ffffff"/><rect x="510" y="349" width="2" height="1" fill="#00a000"/><rect x="509" y="350" width="1" height="1" fill="#ffffff"/><rect x="513" y="350" width="1" height="1" fill="#ffffff"/><rect x="510" y="350" width="3" height="1" fill="#00a000"/><rect x="509" y="351" width="1" height="1" fill="#ffffff"/><rect x="514" y="351" width="1" height="1" fill="#ffffff"/><rect x="510" y="351" width="4" height="1" fill="#00a000"/><rect x="509" y="352" width="1" height="1" fill="#ffffff"/><rect x="513" y="352" width="1" height="1" fill="#ffffff"/><rect x="510" y="352" width="3" height="1" fill="#00a000"/><rect x="509" y="353" width="1" height="1" fill="#ffffff"/><rect x="512" y="353" width="1" height="1" fill="#ffffff"/><rect x="510" y="353" width="2" height="1" fill="#00a000"/><rect x="509" y="354" width="1" height="1" fill="#ffffff"/><rect x="511" y="354" width="1" height="1" fill="#ffffff"/><rect x="510" y="354" width="1" height="1" fill="#00a000"/><rect x="509" y="355" width="1" height="1" fill="#ffffff"/><rect x="510" y="355" width="1" height="1" fill="#ffffff"/><rect x="509" y="356" width="1" height="1" fill="#ffffff"/><rect x="285" y="358" width="1" height="9" fill="#ffffff"/><rect x="286" y="361" width="138" height="3" fill="#00c8c8"/><rect x="424" y="357" width="1" height="1" fill="#ffffff"/><rect x="424" y="358" width="1" height="1" fill="#ffffff"/><rect x="425" y="358" width="1" height="1" fill="#ffffff"/><rect x="424" y="359" width="1" height="1" fill="#ffffff"/><rect x="426" y="359" width="1" height="1" fill="#ffffff"/><rect x="425" y="359" width="1" height="1" fill="#00c8c8"/><rect x="424" y="360" width="1" height="1" fill="#ffffff"/><rect x="427" y="360" width="1" height="1" fill="#ffffff"/><rect x="425" y="360" width="2" height="1" fill="#00c8c8"/><rect x="424" y="361" width="1" height="1" fill="#ffffff"/><rect x="428" y="361" width="1" height="1" fill="#ffffff"/><rect x="425" y="361" width="3" height="1" fill="#00c8c8"/><rect x="424" y="362" width="1" height="1" fill="#ffffff"/><rect x="429" y="362" width="1" height="1" fill="#ffffff"/><rect x="425" y="362" width="4" height="1" fill="#00c8c8"/><rect x="424" y="363" width="1" height="1" fill="#ffffff"/><rect x="428" y="363" width="1" height="1" fill="#ffffff"/><rect x="425" y="363" width="3" height="1" fill="#00c8c8"/><rect x="424" y="364" width="1" height="1" fill="#ffffff"/><rect x="427" y="364" width="1" height="1" fill="#ffffff"/><rect x="425" y="364" width="2" height="1" fill="#00c8c8"/><rect x="424" y="365" width="1" height="1" fill="#ffffff"/><rect x="426" y="365" width="1" height="1" fill="#ffffff"/><rect x="425" y="365" width="1" height="1" fill="#00c8c8"/><rect x="424" y="366" width="1" height="1" fill="#ffffff"/><rect x="425" y="366" width="1" height="1" fill="#ffffff"/><rect x="424" y="367" width="1" height="1" fill="#ffffff"/><rect x="285" y="369" width="1" height="9" fill="#ffffff"/><rect x="286" y="372" width="208" height="3" fill="#00a000"/><rect x="494" y="368" width="1" height="1" fill="#ffffff"/><rect x="494" y="369" width="1" height="1" fill="#ffffff"/><rect x="495" y="369" width="1" height="1" fill="#ffffff"/><rect x="494" y="370" width="1" height="1" fill="#ffffff"/><rect x="496" y="370" width="1" height="1" fill="#ffffff"/><rect x="495" y="370" width="1" height="1" fill="#00a000"/><rect x="494" y="371" width="1" height="1" fill="#ffffff"/><rect x="497" y="371" width="1" height="1" fill="#ffffff"/><rect x="495" y="371" width="2" height="1" fill="#00a000"/><rect x="494" y="372" width="1" height="1" fill="#ffffff"/><rect x="498" y="372" width="1" height="1" fill="#ffffff"/><rect x="495" y="372" width="3" height="1" fill="#00a000"/><rect x="494" y="373" width="1" height="1" fill="#ffffff"/><rect x="499" y="373" width="1" height="1" fill="#ffffff"/><rect x="495" y="373" width="4" height="1" fill="#00a000"/><rect x="494" y="374" width="1" height="1" fill="#ffffff"/><rect x="498" y="374" width="1" height="1" fill="#ffffff"/><rect x="495" y="374" width="3" height="1" fill="#00a000"/><rect x="494" y="375" width="1" height="1" fill="#ffffff"/><rect x="497" y="375" width="1" height="1" fill="#ffffff"/><rect x="495" y="375" width="2" height="1" fill="#00a000"/><rect x="494" y="376" width="1" height="1" fill="#ffffff"/><rect x="496" y="376" width="1" height="1" fill="#ffffff"/><rect x="495" y="376" width="1" height="1" fill="#00a000"/><rect x="494" y="377" width="1" height="1" fill="#ffffff"/><rect x="495" y="377" width="1" height="1" fill="#ffffff"/><rect x="494" y="378" width="1" height="1" fill="#ffffff"/><rect x="285" y="380" width="1" height="9" fill="#ffffff"/><rect x="286" y="383" width="208" height="3" fill="#00a000"/><rect x="494" y="379" width="1" height="1" fill="#ffffff"/><rect x="494" y="380" width="1" height="1" fill="#ffffff"/><rect x="495" y="380" width="1" height="1" fill="#ffffff"/><rect x="494" y="381" width="1" height="1" fill="#ffffff"/><rect x="496" y="381" width="1" height="1" fill="#ffffff"/><rect x="495" y="381" width="1" height="1" fill="#00a000"/><rect x="494" y="382" width="1" height="1" fill="#ffffff"/><rect x="497" y="382" width="1" height="1" fill="#ffffff"/><rect x="495" y="382" width="2" height="1" fill="#00a000"/><rect x="494" y="383" width="1" height="1" fill="#ffffff"/><rect x="498" y="383" width="1" height="1" fill="#ffffff"/><rect x="495" y="383" width="3" height="1" fill="#00a000"/><rect x="494" y="384" width="1" height="1" fill="#ffffff"/><rect x="499" y="384" width="1" height="1" fill="#ffffff"/><rect x="495" y="384" width="4" height="1" fill="#00a000"/><rect x="494" y="385" width="1" height="1" fill="#ffffff"/><rect x="498" y="385" width="1" height="1" fill="#ffffff"/><rect x="495" y="385" width="3" height="1" fill="#00a000"/><rect x="494" y="386" width="1" height="1" fill="#ffffff"/><rect x="497" y="386" width="1" height="1" fill="#ffffff"/><rect x="495" y="386" width="2" height="1" fill="#00a000"/><rect x="494" y="387" width="1" height="1" fill="#ffffff"/><rect x="496" y="387" width="1" height="1" fill="#ffffff"/><rect x="495" y="387" width="1" height="1" fill="#00a000"/><rect x="494" y="388" width="1" height="1" fill="#ffffff"/><rect x="495" y="388" width="1" height="1" fill="#ffffff"/><rect x="494" y="389" width="1" height="1" fill="#ffffff"/><rect x="285" y="391" width="1" height="9" fill="#ffffff"/><rect x="286" y="394" width="138" height="3" fill="#00c8c8"/><rect x="424" y="390" width="1" height="1" fill="#ffffff"/><rect x="424" y="391" width="1" height="1" fill="#ffffff"/><rect x="425" y="391" width="1" height="1" fill="#ffffff"/><rect x="424" y="392" width="1" height="1" fill="#ffffff"/><rect x="426" y="392" width="1" height="1" fill="#ffffff"/><rect x="425" y="392" width="1" height="1" fill="#00c8c8"/><rect x="424" y="393" width="1" height="1" fill="#ffffff"/><rect x="427" y="393" width="1" height="1" fill="#ffffff"/><rect x="425" y="393" width="2" height="1" fill="#00c8c8"/><rect x="424" y="394" width="1" height="1" fill="#ffffff"/><rect x="428" y="394" width="1" height="1" fill="#ffffff"/><rect x="425" y="394" width="3" height="1" fill="#00c8c8"/><rect x="424" y="395" width="1" height="1" fill="#ffffff"/><rect x="429" y="395" width="1" height="1" fill="#ffffff"/><rect x="425" y="395" width="4" height="1" fill="#00c8c8"/><rect x="424" y="396" width="1" height="1" fill="#ffffff"/><rect x="428" y="396" width="1" height="1" fill="#ffffff"/><rect x="425" y="396" width="3" height="1" fill="#00c8c8"/><rect x="424" y="397" width="1" height="1" fill="#ffffff"/><rect x="427" y="397" width="1" height="1" fill="#ffffff"/><rect x="425" y="397" width="2" height="1" fill="#00c8c8"/><rect x="424" y="398" width="1" height="1" fill="#ffffff"/><rect x="426" y="398" width="1" height="1" fill="#ffffff"/><rect x="425" y="398" width="1" height="1" fill="#00c8c8"/><rect x="424" y="399" width="1" height="1" fill="#ffffff"/><rect x="425" y="399" width="1" height="1" fill="#ffffff"/><rect x="424" y="400" width="1" height="1" fill="#ffffff"/><rect x="285" y="402" width="1" height="9" fill="#ffffff"/><rect x="286" y="405" width="223" height="3" fill="#00a000"/><rect x="509" y="401" width="1" height="1" fill="#ffffff"/><rect x="509" y="402" width="1" height="1" fill="#ffffff"/><rect x="510" y="402" width="1" height="1" fill="#ffffff"/><rect x="509" y="403" width="1" height="1" fill="#ffffff"/><rect x="511" y="403" width="1" height="1" fill="#ffffff"/><rect x="510" y="403" width="1" height="1" fill="#00a000"/><rect x="509" y="404" width="1" height="1" fill="#ffffff"/><rect x="512" y="404" width="1" height="1" fill="#ffffff"/><rect x="510" y="404" width="2" height="1" fill="#00a000"/><rect x="509" y="405" width="1" height="1" fill="#ffffff"/><rect x="513" y="405" width="1" height="1" fill="#ffffff"/><rect x="510" y="405" width="3" height="1" fill="#00a000"/><rect x="509" y="406" width="1" height="1" fill="#ffffff"/><rect x="514" y="406" width="1" height="1" fill="#ffffff"/><rect x="510" y="406" width="4" height="1" fill="#00a000"/><rect x="509" y="407" width="1" height="1" fill="#ffffff"/><rect x="513" y="407" width="1" height="1" fill="#ffffff"/><rect x="510" y="407" width="3" height="1" fill="#00a000"/><rect x="509" y="408" width="1" height="1" fill="#ffffff"/><rect x="512" y="408" width="1" height="1" fill="#ffffff"/><rect x="510" y="408" width="2" height="1" fill="#00a000"/><rect x="509" y="409" width="1" height="1" fill="#ffffff"/><rect x="511" y="409" width="1" height="1" fill="#ffffff"/><rect x="510" y="409" width="1" height="1" fill="#00a000"/><rect x="509" y="410" width="1" height="1" fill="#ffffff"/><rect x="510" y="410" width="1" height="1" fill="#ffffff"/><rect x="509" y="411" width="1" height="1" fill="#ffffff"/><rect x="285" y="413" width="1" height="9" fill="#ffffff"/><rect x="333" y="416" width="11" height="3" fill="#000000"/><rect x="286" y="417" width="212" height="1" fill="#00a000"/><rect x="286" y="416" width="47" height="3" fill="#00a000"/><rect x="344" y="416" width="154" height="3" fill="#00a000"/><rect x="498" y="412" width="1" height="1" fill="#ffffff"/><rect x="498" y="413" width="1" height="1" fill="#ffffff"/><rect x="499" y="413" width="1" height="1" fill="#ffffff"/><rect x="498" y="414" width="1" height="1" fill="#ffffff"/><rect x="500" y="414" width="1" height="1" fill="#ffffff"/><rect x="499" y="414" width="1" height="1" fill="#00a000"/><rect x="498" y="415" width="1" height="1" fill="#ffffff"/><rect x="501" y="415" width="1" height="1" fill="#ffffff"/><rect x="499" y="415" width="2" height="1" fill="#00a000"/><rect x="498" y="416" width="1" height="1" fill="#ffffff"/><rect x="502" y="416" width="1" height="1" fill="#ffffff"/><rect x="499" y="416" width="3" height="1" fill="#00a000"/><rect x="498" y="417" width="1" height="1" fill="#ffffff"/><rect x="503" y="417" width="1" height="1" fill="#ffffff"/><rect x="499" y="417" width="4" height="1" fill="#00a000"/><rect x="498" y="418" width="1" height="1" fill="#ffffff"/><rect x="502" y="418" width="1" height="1" fill="#ffffff"/><rect x="499" y="418" width="3" height="1" fill="#00a000"/><rect x="498" y="419" width="1" height="1" fill="#ffffff"/><rect x="501" y="419" width="1" height="1" fill="#ffffff"/><rect x="499" y="419" width="2" height="1" fill="#00a000"/><rect x="498" y="420" width="1" height="1" fill="#ffffff"/><rect x="500" y="420" width="1" height="1" fill="#ffffff"/><rect x="499" y="420" width="1" height="1" fill="#00a000"/><rect x="498" y="421" width="1" height="1" fill="#ffffff"/><rect x="499" y="421" width="1" height="1" fill="#ffffff"/><rect x="498" y="422" width="1" height="1" fill="#ffffff"/><rect x="285" y="424" width="1" height="9" fill="#ffffff"/><rect x="286" y="427" width="116" height="3" fill="#00c8c8"/><rect x="402" y="423" width="1" height="1" fill="#ffffff"/><rect x="402" y="424" width="1" height="1" fill="#ffffff"/><rect x="403" y="424" width="1" height="1" fill="#ffffff"/><rect x="402" y="425" width="1" height="1" fill="#ffffff"/><rect x="404" y="425" width="1" height="1" fill="#ffffff"/><rect x="403" y="425" width="1" height="1" fill="#00c8c8"/><rect x="402" y="426" width="1" height="1" fill="#ffffff"/><rect x="405" y="426" width="1" height="1" fill="#ffffff"/><rect x="403" y="426" width="2" height="1" fill="#00c8c8"/><rect x="402" y="427" width="1" height="1" fill="#ffffff"/><rect x="406" y="427" width="1" height="1" fill="#ffffff"/><rect x="403" y="427" width="3" height="1" fill="#00c8c8"/><rect x="402" y="428" width="1" height="1" fill="#ffffff"/><rect x="407" y="428" width="1" height="1" fill="#ffffff"/><rect x="403" y="428" width="4" height="1" fill="#00c8c8"/><rect x="402" y="429" width="1" height="1" fill="#ffffff"/><rect x="406" y="429" width="1" height="1" fill="#ffffff"/><rect x="403" y="429" width="3" height="1" fill="#00c8c8"/><rect x="402" y="430" width="1" height="1" fill="#ffffff"/><rect x="405" y="430" width="1" height="1" fill="#ffffff"/><rect x="403" y="430" width="2" height="1" fill="#00c8c8"/><rect x="402" y="431" width="1" height="1" fill="#ffffff"/><rect x="404" y="431" width="1" height="1" fill="#ffffff"/><rect x="403" y="431" width="1" height="1" fill="#00c8c8"/><rect x="402" y="432" width="1" height="1" fill="#ffffff"/><rect x="403" y="432" width="1" height="1" fill="#ffffff"/><rect x="402" y="433" width="1" height="1" fill="#ffffff"/><rect x="285" y="435" width="1" height="9" fill="#ffffff"/><rect x="286" y="438" width="142" height="3" fill="#00a000"/><rect x="428" y="434" width="1" height="1" fill="#ffffff"/><rect x="428" y="435" width="1" height="1" fill="#ffffff"/><rect x="429" y="435" width="1" height="1" fill="#ffffff"/><rect x="428" y="436" width="1" height="1" fill="#ffffff"/><rect x="430" y="436" width="1" height="1" fill="#ffffff"/><rect x="429" y="436" width="1" height="1" fill="#00a000"/><rect x="428" y="437" width="1" height="1" fill="#ffffff"/><rect x="431" y="437" width="1" height="1" fill="#ffffff"/><rect x="429" y="437" width="2" height="1" fill="#00a000"/><rect x="428" y="438" width="1" height="1" fill="#ffffff"/><rect x="432" y="438" width="1" height="1" fill="#ffffff"/><rect x="429" y="438" width="3" height="1" fill="#00a000"/><rect x="428" y="439" width="1" height="1" fill="#ffffff"/><rect x="433" y="439" width="1" height="1" fill="#ffffff"/><rect x="429" y="439" width="4" height="1" fill="#00a000"/><rect x="428" y="440" width="1" height="1" fill="#ffffff"/><rect x="432" y="440" width="1" height="1" fill="#ffffff"/><rect x="429" y="440" width="3" height="1" fill="#00a000"/><rect x="428" y="441" width="1" height="1" fill="#ffffff"/><rect x="431" y="441" width="1" height="1" fill="#ffffff"/><rect x="429" y="441" width="2" height="1" fill="#00a000"/><rect x="428" y="442" width="1" height="1" fill="#ffffff"/><rect x="430" y="442" width="1" height="1" fill="#ffffff"/><rect x="429" y="442" width="1" height="1" fill="#00a000"/><rect x="428" y="443" width="1" height="1" fill="#ffffff"/><rect x="429" y="443" width="1" height="1" fill="#ffffff"/><rect x="428" y="444" width="1" height="1" fill="#ffffff"/><rect x="296" y="446" width="1" height="9" fill="#ffffff"/><rect x="297" y="449" width="131" height="3" fill="#00c8c8"/><rect x="428" y="445" width="1" height="1" fill="#ffffff"/><rect x="428" y="446" width="1" height="1" fill="#ffffff"/><rect x="429" y="446" width="1" height="1" fill="#ffffff"/><rect x="428" y="447" width="1" height="1" fill="#ffffff"/><rect x="430" y="447" width="1" height="1" fill="#ffffff"/><rect x="429" y="447" width="1" height="1" fill="#00c8c8"/><rect x="428" y="448" width="1" height="1" fill="#ffffff"/><rect x="431" y="448" width="1" height="1" fill="#ffffff"/><rect x="429" y="448" width="2" height="1" fill="#00c8c8"/><rect x="428" y="449" width="1" height="1" fill="#ffffff"/><rect x="432" y="449" width="1" height="1" fill="#ffffff"/><rect x="429" y="449" width="3" height="1" fill="#00c8c8"/><rect x="428" y="450" width="1" height="1" fill="#ffffff"/><rect x="433" y="450" width="1" height="1" fill="#ffffff"/><rect x="429" y="450" width="4" height="1" fill="#00c8c8"/><rect x="428" y="451" width="1" height="1" fill="#ffffff"/><rect x="432" y="451" width="1" height="1" fill="#ffffff"/><rect x="429" y="451" width="3" height="1" fill="#00c8c8"/><rect x="428" y="452" width="1" height="1" fill="#ffffff"/><rect x="431" y="452" width="1" height="1" fill="#ffffff"/><rect x="429" y="452" width="2" height="1" fill="#00c8c8"/><rect x="428" y="453" width="1" height="1" fill="#ffffff"/><rect x="430" y="453" width="1" height="1" fill="#ffffff"/><rect x="429" y="453" width="1" height="1" fill="#00c8c8"/><rect x="428" y="454" width="1" height="1" fill="#ffffff"/><rect x="429" y="454" width="1" height="1" fill="#ffffff"/><rect x="428" y="455" width="1" height="1" fill="#ffffff"/><rect x="296" y="457" width="1" height="9" fill="#ffffff"/><rect x="297" y="460" width="131" height="3" fill="#00c8c8"/><rect x="428" y="456" width="1" height="1" fill="#ffffff"/><rect x="428" y="457" width="1" height="1" fill="#ffffff"/><rect x="429" y="457" width="1" height="1" fill="#ffffff"/><rect x="428" y="458" width="1" height="1" fill="#ffffff"/><rect x="430" y="458" width="1" height="1" fill="#ffffff"/><rect x="429" y="458" width="1" height="1" fill="#00c8c8"/><rect x="428" y="459" width="1" height="1" fill="#ffffff"/><rect x="431" y="459" width="1" height="1" fill="#ffffff"/><rect x="429" y="459" width="2" height="1" fill="#00c8c8"/><rect x="428" y="460" width="1" height="1" fill="#ffffff"/><rect x="432" y="460" width="1" height="1" fill="#ffffff"/><rect x="429" y="460" width="3" height="1" fill="#00c8c8"/><rect x="428" y="461" width="1" height="1" fill="#ffffff"/><rect x="433" y="461" width="1" height="1" fill="#ffffff"/><rect x="429" y="461" width="4" height="1" fill="#00c8c8"/><rect x="428" y="462" width="1" height="1" fill="#ffffff"/><rect x="432" y="462" width="1" height="1" fill="#ffffff"/><rect x="429" y="462" width="3" height="1" fill="#00c8c8"/><rect x="428" y="463" width="1" height="1" fill="#ffffff"/><rect x="431" y="463" width="1" height="1" fill="#ffffff"/><rect x="429" y="463" width="2" height="1" fill="#00c8c8"/><rect x="428" y="464" width="1" height="1" fill="#ffffff"/><rect x="430" y="464" width="1" height="1" fill="#ffffff"/><rect x="429" y="464" width="1" height="1" fill="#00c8c8"/><rect x="428" y="465" width="1" height="1" fill="#ffffff"/><rect x="429" y="465" width="1" height="1" fill="#ffffff"/><rect x="428" y="466" width="1" height="1" fill="#ffffff"/><rect x="285" y="468" width="1" height="9" fill="#ffffff"/><rect x="286" y="471" width="123" height="3" fill="#00c8c8"/><rect x="409" y="467" width="1" height="1" fill="#ffffff"/><rect x="409" y="468" width="1" height="1" fill="#ffffff"/><rect x="410" y="468" width="1" height="1" fill="#ffffff"/><rect x="409" y="469" width="1" height="1" fill="#ffffff"/><rect x="411" y="469" width="1" height="1" fill="#ffffff"/><rect x="410" y="469" width="1" height="1" fill="#00c8c8"/><rect x="409" y="470" width="1" height="1" fill="#ffffff"/><rect x="412" y="470" width="1" height="1" fill="#ffffff"/><rect x="410" y="470" width="2" height="1" fill="#00c8c8"/><rect x="409" y="471" width="1" height="1" fill="#ffffff"/><rect x="413" y="471" width="1" height="1" fill="#ffffff"/><rect x="410" y="471" width="3" height="1" fill="#00c8c8"/><rect x="409" y="472" width="1" height="1" fill="#ffffff"/><rect x="414" y="472" width="1" height="1" fill="#ffffff"/><rect x="410" y="472" width="4" height="1" fill="#00c8c8"/><rect x="409" y="473" width="1" height="1" fill="#ffffff"/><rect x="413" y="473" width="1" height="1" fill="#ffffff"/><rect x="410" y="473" width="3" height="1" fill="#00c8c8"/><rect x="409" y="474" width="1" height="1" fill="#ffffff"/><rect x="412" y="474" width="1" height="1" fill="#ffffff"/><rect x="410" y="474" width="2" height="1" fill="#00c8c8"/><rect x="409" y="475" width="1" height="1" fill="#ffffff"/><rect x="411" y="475" width="1" height="1" fill="#ffffff"/><rect x="410" y="475" width="1" height="1" fill="#00c8c8"/><rect x="409" y="476" width="1" height="1" fill="#ffffff"/><rect x="410" y="476" width="1" height="1" fill="#ffffff"/><rect x="409" y="477" width="1" height="1" fill="#ffffff"/><rect x="285" y="479" width="1" height="9" fill="#ffffff"/><rect x="286" y="482" width="194" height="3" fill="#a820a8"/><rect x="480" y="478" width="1" height="1" fill="#ffffff"/><rect x="480" y="479" width="1" height="1" fill="#ffffff"/><rect x="481" y="479" width="1" height="1" fill="#ffffff"/><rect x="480" y="480" width="1" height="1" fill="#ffffff"/><rect x="482" y="480" width="1" height="1" fill="#ffffff"/><rect x="481" y="480" width="1" height="1" fill="#a820a8"/><rect x="480" y="481" width="1" height="1" fill="#ffffff"/><rect x="483" y="481" width="1" height="1" fill="#ffffff"/><rect x="481" y="481" width="2" height="1" fill="#a820a8"/><rect x="480" y="482" width="1" height="1" fill="#ffffff"/><rect x="484" y="482" width="1" height="1" fill="#ffffff"/><rect x="481" y="482" width="3" height="1" fill="#a820a8"/><rect x="480" y="483" width="1" height="1" fill="#ffffff"/><rect x="485" y="483" width="1" height="1" fill="#ffffff"/><rect x="481" y="483" width="4" height="1" fill="#a820a8"/><rect x="480" y="484" width="1" height="1" fill="#ffffff"/><rect x="484" y="484" width="1" height="1" fill="#ffffff"/><rect x="481" y="484" width="3" height="1" fill="#a820a8"/><rect x="480" y="485" width="1" height="1" fill="#ffffff"/><rect x="483" y="485" width="1" height="1" fill="#ffffff"/><rect x="481" y="485" width="2" height="1" fill="#a820a8"/><rect x="480" y="486" width="1" height="1" fill="#ffffff"/><rect x="482" y="486" width="1" height="1" fill="#ffffff"/><rect x="481" y="486" width="1" height="1" fill="#a820a8"/><rect x="480" y="487" width="1" height="1" fill="#ffffff"/><rect x="481" y="487" width="1" height="1" fill="#ffffff"/><rect x="480" y="488" width="1" height="1" fill="#ffffff"/><rect x="330" y="485" width="1" height="2" fill="#fff080"/><rect x="329" y="487" width="3" height="2" fill="#fff080"/><rect x="337" y="485" width="1" height="2" fill="#fff080"/><rect x="336" y="487" width="3" height="2" fill="#fff080"/><rect x="10" y="45" width="1" height="9" fill="#ffffff"/><rect x="517" y="45" width="1" height="9" fill="#ffffff"/><rect x="82" y="498" width="1" height="2" fill="#fff080"/><rect x="81" y="500" width="3" height="2" fill="#fff080"/><rect x="80" y="502" width="5" height="3" fill="#fff080"/><rect x="155" y="501" width="6" height="1" fill="#00c8c8"/><rect x="438" y="497" width="1" height="9" fill="#333000"/><rect x="456" y="497" width="1" height="9" fill="#333000"/><rect x="439" y="500" width="17" height="3" fill="#00c8c8"/><rect x="231" y="2" width="2" height="1" fill="#ffffff"/><rect x="235" y="2" width="1" height="1" fill="#ffffff"/><rect x="230" y="3" width="6" height="1" fill="#ffffff"/><rect x="230" y="4" width="1" height="1" fill="#ffffff"/><rect x="233" y="4" width="2" height="1" fill="#ffffff"/><rect x="355" y="2" width="2" height="1" fill="#ffffff"/><rect x="359" y="2" width="1" height="1" fill="#ffffff"/><rect x="354" y="3" width="6" height="1" fill="#ffffff"/><rect x="354" y="4" width="1" height="1" fill="#ffffff"/><rect x="357" y="4" width="2" height="1" fill="#ffffff"/><rect x="479" y="2" width="2" height="1" fill="#ffffff"/><rect x="483" y="2" width="1" height="1" fill="#ffffff"/><rect x="478" y="3" width="6" height="1" fill="#ffffff"/><rect x="478" y="4" width="1" height="1" fill="#ffffff"/><rect x="481" y="4" width="2" height="1" fill="#ffffff"/><rect x="596" y="2" width="2" height="1" fill="#ffffff"/><rect x="600" y="2" width="1" height="1" fill="#ffffff"/><rect x="595" y="3" width="6" height="1" fill="#ffffff"/><rect x="595" y="4" width="1" height="1" fill="#ffffff"/><rect x="598" y="4" width="2" height="1" fill="#ffffff"/><rect x="581" y="68" width="5" height="1" fill="#ffffff"/><rect x="581" y="79" width="5" height="1" fill="#ffffff"/><rect x="581" y="90" width="5" height="1" fill="#ffffff"/><rect x="581" y="101" width="5" height="1" fill="#ffffff"/><rect x="581" y="112" width="5" height="1" fill="#ffffff"/><rect x="581" y="123" width="5" height="1" fill="#ffffff"/><rect x="581" y="134" width="5" height="1" fill="#ffffff"/><rect x="581" y="145" width="5" height="1" fill="#ffffff"/><rect x="581" y="156" width="5" height="1" fill="#ffffff"/><rect x="581" y="167" width="5" height="1" fill="#ffffff"/><rect x="581" y="178" width="5" height="1" fill="#ffffff"/><rect x="581" y="189" width="5" height="1" fill="#ffffff"/><rect x="581" y="200" width="5" height="1" fill="#ffffff"/><rect x="581" y="211" width="5" height="1" fill="#ffffff"/><rect x="581" y="222" width="5" height="1" fill="#ffffff"/><rect x="581" y="233" width="5" height="1" fill="#ffffff"/><rect x="581" y="244" width="5" height="1" fill="#ffffff"/><rect x="581" y="255" width="5" height="1" fill="#ffffff"/><rect x="581" y="266" width="5" height="1" fill="#ffffff"/><rect x="581" y="277" width="5" height="1" fill="#ffffff"/><rect x="581" y="288" width="5" height="1" fill="#ffffff"/><rect x="581" y="299" width="5" height="1" fill="#ffffff"/><rect x="581" y="310" width="5" height="1" fill="#ffffff"/><rect x="581" y="321" width="5" height="1" fill="#ffffff"/><rect x="581" y="332" width="5" height="1" fill="#ffffff"/><rect x="581" y="343" width="5" height="1" fill="#ffffff"/><rect x="581" y="354" width="5" height="1" fill="#ffffff"/><rect x="581" y="365" width="5" height="1" fill="#ffffff"/><rect x="581" y="376" width="5" height="1" fill="#ffffff"/><rect x="581" y="387" width="5" height="1" fill="#ffffff"/><rect x="581" y="398" width="5" height="1" fill="#ffffff"/><rect x="581" y="409" width="5" height="1" fill="#ffffff"/><rect x="581" y="420" width="5" height="1" fill="#ffffff"/><rect x="581" y="431" width="5" height="1" fill="#ffffff"/><rect x="581" y="442" width="5" height="1" fill="#ffffff"/><rect x="581" y="453" width="5" height="1" fill="#ffffff"/><rect x="581" y="464" width="5" height="1" fill="#ffffff"/><rect x="581" y="475" width="5" height="1" fill="#ffffff"/><rect x="581" y="486" width="5" height="1" fill="#ffffff"/></svg>
<div class="b" style="left:113px;top:1px;color:#fff">20%</div><div class="b" style="left:237px;top:1px;color:#fff">40%</div><div class="b" style="left:361px;top:1px;color:#fff">60%</div><div class="b" style="left:485px;top:1px;color:#fff">80%</div><div class="b" style="left:602px;top:1px;color:#fff">100%</div><div class="b" style="left:10px;top:26px;color:#fff">AV407716</div><div class="t" style="left:402px;top:30px;color:#0c0c5c">AlignView.pm Beta rel.7</div><div class="s" style="left:13px;top:44px;color:#fff">1</div><div class="s" style="left:496px;top:44px;color:#fff">412</div><div class="s" style="left:526.5px;top:59px;color:#fff">UniRef1OO Q2PEQ8</div><div class="s" style="left:526.5px;top:70px;color:#fff">UniRef1OO A5C3N2</div><div class="s" style="left:526.5px;top:81px;color:#fff">UniRef1OO Q66PX3</div><div class="s" style="left:526.5px;top:92px;color:#fff">UniRef1OO C5YMN8</div><div class="s" style="left:526.5px;top:103px;color:#fff">UniRef1OO B6TRY7</div><div class="s" style="left:526.5px;top:114px;color:#fff">UniRef1OO UPIOOO..</div><div class="s" style="left:526.5px;top:125px;color:#fff">UniRef1OO A5AUZ5</div><div class="s" style="left:526.5px;top:136px;color:#fff">UniRef1OO Q9SJY5</div><div class="s" style="left:526.5px;top:147px;color:#fff">UniRef1OO Q94K32</div><div class="s" style="left:526.5px;top:158px;color:#fff">UniRef1OO Q8LDF6</div><div class="s" style="left:526.5px;top:169px;color:#fff">UniRef1OO QOWL82</div><div class="s" style="left:526.5px;top:180px;color:#fff">UniRef1OO B9SXH6</div><div class="s" style="left:526.5px;top:191px;color:#fff">UniRef1OO Q66PX4</div><div class="s" style="left:526.5px;top:202px;color:#fff">UniRef1OO B9H6W5</div><div class="s" style="left:526.5px;top:213px;color:#fff">UniRef1OO B9IJBO</div><div class="s" style="left:526.5px;top:224px;color:#fff">UniRef1OO B9RJV4</div><div class="s" style="left:526.5px;top:235px;color:#fff">UniRef1OO B9HED7</div><div class="s" style="left:526.5px;top:246px;color:#fff">UniRef1OO Q9SB52</div><div class="s" style="left:526.5px;top:257px;color:#fff">UniRef1OO COZ2N8</div><div class="s" style="left:526.5px;top:268px;color:#fff">UniRef1OO A7ROJ1</div><div class="s" style="left:526.5px;top:279px;color:#fff">UniRef1OO COPSC7</div><div class="s" style="left:526.5px;top:290px;color:#fff">UniRef1OO COPPS7</div><div class="s" style="left:526.5px;top:301px;color:#fff">UniRef1OO B9S9F1</div><div class="s" style="left:526.5px;top:312px;color:#fff">UniRef1OO A9NUC3</div><div class="s" style="left:526.5px;top:323px;color:#fff">UniRef1OO B9GN26</div><div class="s" style="left:526.5px;top:334px;color:#fff">UniRef1OO B9IJ89</div><div class="s" style="left:526.5px;top:345px;color:#fff">UniRef1OO B9NGP8</div><div class="s" style="left:526.5px;top:356px;color:#fff">UniRef1OO B9G1F6</div><div class="s" style="left:526.5px;top:367px;color:#fff">UniRef1OO B9IJ9O</div><div class="s" style="left:526.5px;top:378px;color:#fff">UniRef1OO B9IJ87</div><div class="s" style="left:526.5px;top:389px;color:#fff">UniRef1OO Q6ZB95</div><div class="s" style="left:526.5px;top:400px;color:#fff">UniRef1OO A9PGN9</div><div class="s" style="left:526.5px;top:411px;color:#fff">UniRef1OO Q6YXI3</div><div class="s" style="left:526.5px;top:422px;color:#fff">UniRef1OO B9S9F2</div><div class="s" style="left:526.5px;top:433px;color:#fff">UniRef1OO A3BZP5</div><div class="s" style="left:526.5px;top:444px;color:#fff">UniRef1OO A9U2SO</div><div class="s" style="left:526.5px;top:455px;color:#fff">UniRef1OO A9THI1</div><div class="s" style="left:526.5px;top:466px;color:#fff">UniRef1OO A9TWJ8</div><div class="s" style="left:526.5px;top:477px;color:#fff">UniRef1OO Q9FY68</div><div class="s" style="left:9px;top:496px;color:#fff">Large gaps:</div><div class="s" style="left:87px;top:496px;color:#fff">(in Query)/</div><div class="s" style="left:160px;top:496px;color:#fff"> (in Subject)</div><div class="s" style="left:459px;top:496px;color:#fff">=1OOchar.</div>
</body></html>
